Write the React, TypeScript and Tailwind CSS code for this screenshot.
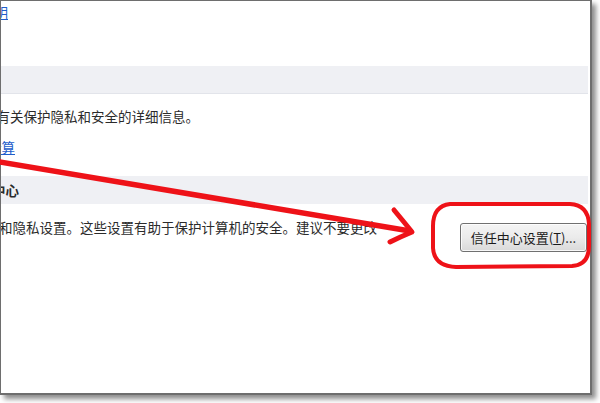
import React from "react";

const font = { fontFamily: '"Noto Sans CJK SC", "Noto Sans", sans-serif' };

function Cut({ w, children, className = "" }: { w: string; children: React.ReactNode; className?: string }) {
  return (
    <div className={`${w} flex justify-end whitespace-nowrap shrink-0 ${className}`}>
      <span className="shrink-0">{children}</span>
    </div>
  );
}

export default function App() {
  return (
    <div className="relative w-[600px] h-[403px] bg-white overflow-hidden" style={font}>
      <div className="w-[592px] h-[395px] bg-white border-l border-t border-r-2 border-b-2 border-[#6e6e6e] shadow-[4px_4px_5px_rgba(0,0,0,0.45)] overflow-hidden flex flex-col text-[13.5px] text-[#2b2b2b]">
        <div className="mt-[2px] h-[18px] leading-[18px] flex">
          <Cut w="w-[7px]" className="text-[#1e5ecb] underline">阅读 Microsoft Office 隐私声明</Cut>
        </div>
        <div className="mt-[45px] h-[28px] mr-[2px] bg-[#eff0f4] border-b border-[#e2e4ea]" />
        <div className="mt-[13px] h-[18px] leading-[18px] flex">
          <Cut w="w-[198px]">了解有关保护隐私和安全的详细信息。</Cut>
        </div>
        <div className="mt-[13px] h-[18px] leading-[18px] flex">
          <Cut w="w-[14px]" className="text-[#1e5ecb] underline">Microsoft 可信任计算</Cut>
        </div>
        <div className="mt-[20px] h-[28px] mr-[2px] bg-[#eff0f4] flex items-center">
          <Cut w="w-[18px]" className="font-bold leading-[18px]">Microsoft Office 信任中心</Cut>
        </div>
        <div className="mt-[14px] flex items-start">
          <Cut w="w-[376px]" className="h-[18px] leading-[18px]">信任中心包含安全设置和隐私设置。这些设置有助于保护计算机的安全。建议不要更改</Cut>
          <div className="ml-auto mr-[3px] mt-[5px] w-[127px] h-[29px] rounded-[3px] border border-[#707070] bg-gradient-to-b from-[#f4f4f4] via-[#ebebeb] to-[#d9d9d9] shadow-[inset_0_0_0_1px_rgba(255,255,255,0.8)] flex items-center justify-center text-[13px] text-[#1a1a1a]">
            信任中心设置(<span className="underline">T</span>)...
          </div>
        </div>
      </div>
      <svg className="absolute left-0 top-0 pointer-events-none" width="600" height="403" viewBox="0 0 600 403">
        <g fill="none" stroke="#ee1218" strokeLinecap="round" strokeLinejoin="round">
          <path d="M -6 161 L 410 231" strokeWidth="5.5" />
          <path d="M 394 210 Q 404 222 412 232 Q 400 237 390 242" strokeWidth="5" />
          <path d="M 450 204 Q 433 206 433 226 L 433 248 Q 434 266 456 267 L 572 266 Q 589 265 589 246 L 589 224 Q 588 205 570 204 Z" strokeWidth="4" />
        </g>
      </svg>
    </div>
  );
}
